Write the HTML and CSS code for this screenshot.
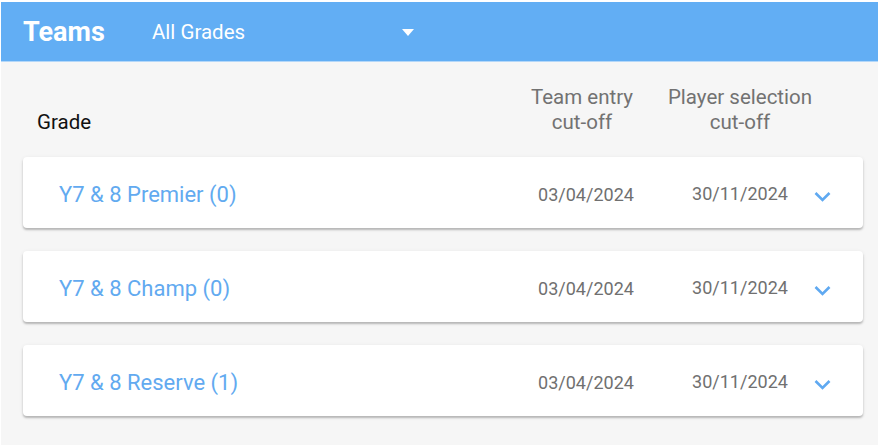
FILE: index.html
```html
<!DOCTYPE html>
<html lang="en">
<head>
    <meta charset="UTF-8">
    <meta name="viewport" content="width=device-width, initial-scale=1.0">
    <title>Teams</title>
    <link rel="stylesheet" href="styles.css">
</head>
<body>
    <div class="app">
        <header class="toolbar">
            <div class="title">Teams</div>
            <div class="grade-select">
                <span>All Grades</span>
                <span class="caret"></span>
            </div>
        </header>

        <main class="content">
            <div class="row head">
                <div class="col-grade">Grade</div>
                <div class="col-date">Team entry<br>cut-off</div>
                <div class="col-date">Player selection<br>cut-off</div>
                <div></div>
            </div>

            <div class="row card">
                <div class="team-name">Y7 &amp; 8 Premier (0)</div>
                <div class="col-date date">03/04/2024</div>
                <div class="col-date date second">30/11/2024</div>
                <div class="expand">
                    <svg width="17" height="11" viewBox="0 0 17 11"><polyline points="1.5,2 8.5,9 15.5,2" fill="none" stroke="#5fa9f1" stroke-width="2.6"/></svg>
                </div>
            </div>

            <div class="row card">
                <div class="team-name">Y7 &amp; 8 Champ (0)</div>
                <div class="col-date date">03/04/2024</div>
                <div class="col-date date second">30/11/2024</div>
                <div class="expand">
                    <svg width="17" height="11" viewBox="0 0 17 11"><polyline points="1.5,2 8.5,9 15.5,2" fill="none" stroke="#5fa9f1" stroke-width="2.6"/></svg>
                </div>
            </div>

            <div class="row card">
                <div class="team-name">Y7 &amp; 8 Reserve (1)</div>
                <div class="col-date date">03/04/2024</div>
                <div class="col-date date second">30/11/2024</div>
                <div class="expand">
                    <svg width="17" height="11" viewBox="0 0 17 11"><polyline points="1.5,2 8.5,9 15.5,2" fill="none" stroke="#5fa9f1" stroke-width="2.6"/></svg>
                </div>
            </div>
        </main>
    </div>
</body>
</html>
```

FILE: styles.css
```css
html, body {
    margin: 0;
    height: 100%;
}
body {
    font-family: Roboto, 'Liberation Sans', sans-serif;
    background: #ffffff;
    padding: 2px 2px 0 1px;
    box-sizing: border-box;
    overflow: hidden;
}
.app {
    background: #f6f6f6;
    min-height: 100%;
}
.toolbar {
    height: 59px;
    background: #62aef4;
    border-bottom: 1px solid #b3d7f9;
    display: flex;
    align-items: center;
    padding-left: 22px;
    color: white;
}
.title {
    font-size: 27px;
    font-weight: 700;
    width: 129px;
}
.grade-select {
    display: flex;
    align-items: center;
    width: 262px;
    justify-content: space-between;
    font-size: 20.5px;
}
.caret {
    width: 0;
    height: 0;
    border-left: 6px solid transparent;
    border-right: 6px solid transparent;
    border-top: 7px solid white;
    margin-top: 1px;
}
.content {
    padding: 23px 15px 30px 22px;
}
.row {
    display: grid;
    grid-template-columns: 1fr 178px 130px 34px;
    align-items: center;
}
.head {
    align-items: end;
    font-size: 20.5px;
    line-height: 25px;
    color: #727272;
    padding-left: 14px;
    padding-right: 24px;
    margin-bottom: 22px;
}
.head .col-grade {
    color: #111;
}
.head .col-date {
    white-space: nowrap;
    width: max-content;
    justify-self: center;
}
.head .col-date:nth-child(2) {
    transform: translateX(-4px);
}
.col-date {
    text-align: center;
}
.card {
    box-sizing: border-box;
    background: white;
    height: 71px;
    border-radius: 4px;
    box-shadow: 0 2px 2px rgba(0, 0, 0, 0.22), 0 1px 4px rgba(0, 0, 0, 0.08);
    padding: 4px 24px 0 36px;
    margin-bottom: 23px;
}
.team-name {
    color: #62aaf0;
    font-size: 22px;
}
.date {
    color: #707070;
    font-size: 18px;
}
.date.second {
    margin-top: -2px;
}
.expand {
    display: flex;
    justify-content: center;
    padding-top: 3px;
}
```
